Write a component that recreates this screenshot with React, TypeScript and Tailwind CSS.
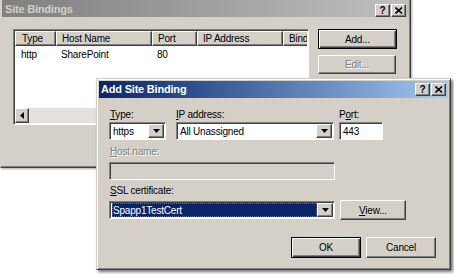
import type { ReactNode } from "react"

const raised =
  "border border-t-white border-l-white border-r-[#404040] border-b-[#404040] shadow-[inset_-1px_-1px_0_#808080]"
const sunken =
  "border border-t-[#808080] border-l-[#808080] border-r-white border-b-white shadow-[inset_1px_1px_0_#404040]"
const defaultBtn =
  "border border-black shadow-[inset_1px_1px_0_#fff,inset_-1px_-1px_0_#404040,inset_-2px_-2px_0_#808080]"

function Key({ children }: { children: ReactNode }) {
  return <span className="underline underline-offset-[1px]">{children}</span>
}

function CaptionButtons() {
  return (
    <div className="flex gap-[1px]">
      <div className={`w-[15px] h-[13px] bg-[#d4d0c8] flex items-center justify-center text-[10px] font-bold leading-none text-black ${raised}`}>
        ?
      </div>
      <div className={`w-[15px] h-[13px] bg-[#d4d0c8] flex items-center justify-center ${raised}`}>
        <svg width="8" height="7" viewBox="0 0 8 7">
          <path d="M0.5 0.5 L7 6.5 M7 0.5 L0.5 6.5" stroke="#000" strokeWidth="1.6" />
        </svg>
      </div>
    </div>
  )
}

function Arrow() {
  return (
    <div className={`w-[16px] h-full bg-[#d4d0c8] flex items-center justify-center ${raised}`}>
      <svg width="7" height="4" viewBox="0 0 7 4">
        <path d="M0 0 H7 L3.5 4 Z" fill="#000" />
      </svg>
    </div>
  )
}

function Dropdown({ value, width, selected }: { value: string; width: string; selected?: boolean }) {
  return (
    <div className={`${width} h-[18px] bg-white flex items-stretch p-[1px] ${sunken}`}>
      <div className="flex-1 flex items-center pl-[1px]">
        <span
          className={`px-[1px] h-full flex items-center flex-1 ${
            selected ? "bg-[#0a246a] text-white outline-dotted outline-1 outline-[#6070b0] -outline-offset-1" : "text-black"
          }`}
        >
          {value}
        </span>
      </div>
      <Arrow />
    </div>
  )
}

function Button({ label, className = "", isDefault, disabled }: { label: ReactNode; className?: string; isDefault?: boolean; disabled?: boolean }) {
  return (
    <div
      className={`bg-[#d4d0c8] flex items-center justify-center ${isDefault ? defaultBtn : raised} ${
        disabled ? "text-[#808080] [text-shadow:1px_1px_0_#fff]" : "text-black"
      } ${className}`}
    >
      {label}
    </div>
  )
}

export default function App() {
  const columns = [
    { label: "Type", w: "w-[41px]" },
    { label: "Host Name", w: "w-[96px]" },
    { label: "Port", w: "w-[45px]" },
    { label: "IP Address", w: "w-[86px]" },
    { label: "Bind", w: "w-[30px]" },
  ]

  return (
    <div
      className="relative w-[454px] h-[274px] bg-white overflow-hidden text-[10px] tracking-[-0.2px]"
      style={{ fontFamily: '"Liberation Sans", Arial, sans-serif' }}
    >
      {/* Site Bindings (inactive window) */}
      <div className="absolute left-0 top-[-2px] w-[411px] h-[170px] bg-[#d4d0c8] border border-t-[#d4d0c8] border-l-[#d4d0c8] border-r-[#404040] border-b-[#404040] shadow-[inset_-1px_-1px_0_#808080,1px_1px_2px_rgba(0,0,0,0.35)] flex flex-col">
        <div className="h-[17px] mx-[1px] mt-[1px] bg-gradient-to-r from-[#808080] to-[#c0c0c0] flex items-center justify-between pl-[3px] pr-[3px]">
          <span className="font-bold text-[11px] text-[#d4d0c8] pt-[2px]">Site Bindings</span>
          <div className="pt-[4px]">
            <CaptionButtons />
          </div>
        </div>

        <div className="flex pl-[12px] pt-[12px]">
          {/* list view */}
          <div className={`w-[296px] h-[96px] bg-white flex flex-col ${sunken} p-[1px]`}>
            <div className="flex h-[15px] overflow-hidden">
              {columns.map((c) => (
                <div
                  key={c.label}
                  className={`${c.w} shrink-0 bg-[#d4d0c8] flex items-center pl-[5px] ${raised} ${c.label === "Type" ? "pl-[6px]" : ""}`}
                >
                  {c.label}
                </div>
              ))}
            </div>
            <div className="flex h-[17px] items-center text-black">
              <span className="w-[41px] pl-[6px]">http</span>
              <span className="w-[96px] pl-[5px]">SharePoint</span>
              <span className="w-[45px] pl-[5px]">80</span>
            </div>
            <div className="flex-1" />
            <div className="h-[15px] flex bg-[#e4e1dc]">
              <div className={`w-[14px] h-full bg-[#d4d0c8] flex items-center justify-center ${raised}`}>
                <svg width="4" height="7" viewBox="0 0 4 7">
                  <path d="M4 0 V7 L0 3.5 Z" fill="#000" />
                </svg>
              </div>
              <div className="flex-1" />
            </div>
          </div>

          <div className="flex flex-col ml-[9px] gap-[6px]">
            <Button label="Add..." isDefault className="w-[79px] h-[20px]" />
            <Button label="Edit..." disabled className="w-[78px] h-[19px]" />
          </div>
        </div>
      </div>

      {/* Add Site Binding (active dialog) */}
      <div className="absolute left-[96px] top-[78px] w-[355px] h-[192px] bg-[#d4d0c8] border border-t-[#d4d0c8] border-l-[#d4d0c8] border-r-[#404040] border-b-[#404040] shadow-[inset_1px_1px_0_#fff,inset_-1px_-1px_0_#808080,2px_2px_3px_rgba(0,0,0,0.55)] p-[2px] flex flex-col">
        <div className="h-[17px] bg-gradient-to-r from-[#0a246a] to-[#a6caf0] flex items-center justify-between pl-[2px] pr-[2px]">
          <span className="font-bold text-[11px] text-white">Add Site Binding</span>
          <CaptionButtons />
        </div>

        <div className="flex flex-col pl-[10px] text-black">
          <div className="flex mt-[10px]">
            <div className="flex flex-col w-[57px]">
              <span className="h-[13px] pl-[1px] leading-[13px]">
                <Key>T</Key>ype:
              </span>
              <div className="mt-[1px]">
                <Dropdown value="https" width="w-[57px]" />
              </div>
            </div>
            <div className="flex flex-col w-[158px] ml-[10px]">
              <span className="h-[13px] leading-[13px]">
                <Key>I</Key>P address:
              </span>
              <div className="mt-[1px]">
                <Dropdown value="All Unassigned" width="w-[158px]" />
              </div>
            </div>
            <div className="flex flex-col ml-[5px]">
              <span className="h-[13px] leading-[13px]">
                P<Key>o</Key>rt:
              </span>
              <div className={`mt-[1px] w-[44px] h-[18px] bg-white flex items-center pl-[3px] ${sunken}`}>443</div>
            </div>
          </div>

          <span className="mt-[5px] h-[13px] leading-[13px] pl-[1px] text-[#808080] [text-shadow:1px_1px_0_#fff]">
            <Key>H</Key>ost name:
          </span>
          <div className={`mt-[4px] w-[226px] h-[18px] bg-[#d4d0c8] ${sunken}`} />

          <span className="mt-[4px] h-[13px] leading-[13px] pl-[1px]">
            <Key>S</Key>SL certificate:
          </span>
          <div className="flex items-center mt-[3px]">
            <Dropdown value="Spapp1TestCert" width="w-[226px]" selected />
            <Button
              label={
                <span>
                  <Key>V</Key>iew...
                </span>
              }
              className="ml-[5px] w-[66px] h-[20px]"
            />
          </div>

          <div className="flex justify-end mt-[17px] pr-[12px] gap-[5px]">
            <Button label="OK" isDefault className="w-[70px] h-[21px]" />
            <Button label="Cancel" className="w-[70px] h-[21px]" />
          </div>
        </div>
      </div>
    </div>
  )
}
